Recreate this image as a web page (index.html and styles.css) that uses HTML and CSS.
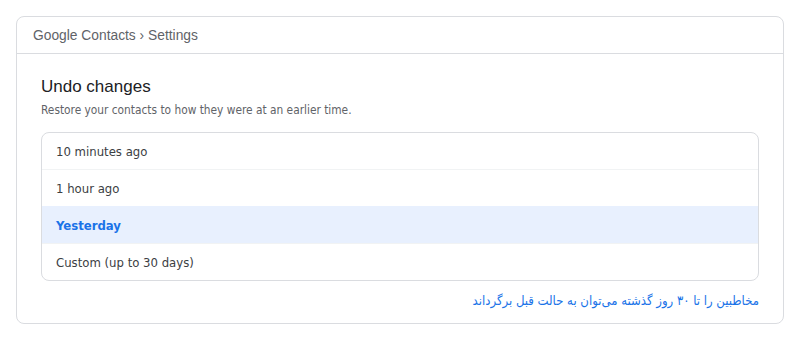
FILE: index.html
```html
<!DOCTYPE html>
<html lang="en">
<head>
<meta charset="utf-8">
<title>Google Contacts Settings</title>
<link rel="stylesheet" href="styles.css">
</head>
<body>
<div class="card">
  <div class="card-header">Google Contacts › Settings</div>
  <div class="card-body">
    <h1 class="title">Undo changes</h1>
    <p class="subtitle">Restore your contacts to how they were at an earlier time.</p>
    <ul class="options">
      <li class="option">10 minutes ago</li>
      <li class="option">1 hour ago</li>
      <li class="option selected">Yesterday</li>
      <li class="option">Custom (up to 30 days)</li>
    </ul>
    <p class="note" dir="rtl" lang="fa">مخاطبین را تا ۳۰ روز گذشته می‌توان به حالت قبل برگرداند</p>
  </div>
</div>
</body>
</html>
```
FILE: styles.css
```css
html, body {
  margin: 0;
  padding: 0;
  background: #ffffff;
}
body {
  padding: 16px 16px 0 16px;
  font-family: "DejaVu Sans Condensed", "Liberation Sans", sans-serif;
  color: #3c4043;
}
.card {
  border: 1px solid #dadce0;
  border-radius: 8px;
  background: #fff;
}
.card-header {
  height: 36px;
  display: flex;
  align-items: center;
  padding: 0 16px;
  border-bottom: 1px solid #dadce0;
  font-family: "Liberation Sans", sans-serif;
  font-size: 13.8px;
  color: #5f6368;
}
.card-body {
  padding: 22px 24px 14px 24px;
}
.title {
  margin: 0;
  font-family: "Liberation Sans", sans-serif;
  font-weight: normal;
  font-size: 17px;
  line-height: 22px;
  color: #202124;
}
.subtitle {
  margin: 4px 0 0 0;
  font-size: 11.8px;
  line-height: 16px;
  color: #5f6368;
}
.options {
  list-style: none;
  margin: 14px 0 0 0;
  padding: 0;
  border: 1px solid #dadce0;
  border-radius: 8px;
  overflow: hidden;
}
.option {
  height: 36px;
  display: flex;
  align-items: center;
  padding: 0 14px;
  font-size: 13px;
  color: #3c4043;
  border-top: 1px solid #f1f3f4;
}
.option:first-child {
  border-top: none;
}
.option.selected {
  background: #e8f0fe;
  color: #1a73e8;
  font-weight: bold;
  border-top-color: #e8f0fe;
}
.note {
  margin: 12px 0 0 0;
  font-family: "DejaVu Sans Condensed", "DejaVu Sans", sans-serif;
  font-size: 13px;
  line-height: 16px;
  color: #1a73e8;
  text-align: right;
}
```
